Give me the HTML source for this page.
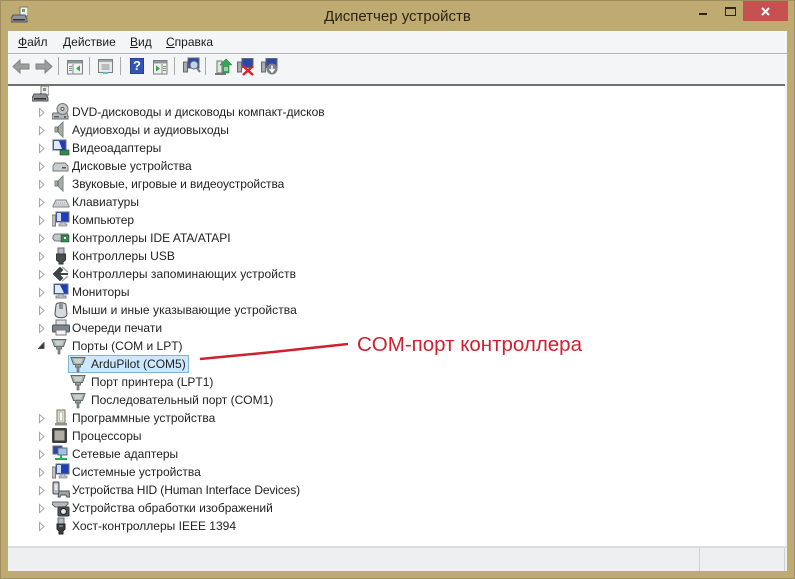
<!DOCTYPE html>
<html lang="ru"><head><meta charset="utf-8"><title>Диспетчер устройств</title>
<style>
html,body{margin:0;padding:0;background:#bda96f}
#w{position:relative;width:795px;height:579px;overflow:hidden;background:#bfab72;font-family:"Liberation Sans",sans-serif;color:#111;box-shadow:inset 0 0 0 1px #a08f5e}
#w div,#w svg{position:absolute}
.t{font-size:12px;line-height:18px;height:18px;white-space:nowrap;color:#222}
.m{font-size:12px;top:35px;color:#1a1a1a;line-height:15px}
u{text-decoration:underline}
.sep{width:1px;height:18px;top:57px;background:#a9a9a9}
</style></head><body><div id="w">
<svg style="left:0;top:0" width="795" height="579" viewBox="0 0 795 579">
<defs>
<g id="disk"><path d="M1 9h14l1 3v3H0v-3z" fill="#b4b7b9" stroke="#666b6f"/><rect x="2" y="12" width="5" height="1.500" fill="#5b6065"/><circle cx="13" cy="13" r="1" fill="#444"/></g>
<g id="dvd"><g transform="translate(0,1)"><use href="#disk"/></g><circle cx="10.500" cy="6" r="5.500" fill="#c3c8cc" stroke="#71787c"/><circle cx="10.500" cy="6" r="1.500" fill="#fff" stroke="#555"/></g>
<g id="spk"><path d="M3 6h3l5-5v15l-5-5H3z" fill="#a9ada9" stroke="#7e827e"/><path d="M6 6v5" stroke="#555"/></g>
<g id="mon"><rect x="2" y="1" width="14" height="10" fill="#1f3fb0" stroke="#6b7378"/><path d="M3 2h5l4 8H3z" fill="#dfe9f8"/><path d="M7 11h4v2h3v2H4v-2h3z" fill="#c0c4c8" stroke="#888"/></g>
<g id="pc"><rect x="0" y="4" width="3.500" height="11" fill="#c0c2c2" stroke="#777"/><rect x="4" y="1" width="13" height="10" fill="#1e3fb5" stroke="#66707a"/><path d="M5 2h4v8H5z" fill="#e5eefa" opacity=".9"/><path d="M9 11h4v2h2v2H7v-2h2z" fill="#c0c4c8" stroke="#888" stroke-width=".7"/></g>
<g id="port"><path d="M1 2.500h14l-2.500 7H3.500z" fill="#aeb4b4" stroke="#5d6a6a"/><path d="M4 5h8M5 7h6" stroke="#e6eaea"/><rect x="5.500" y="9.500" width="5" height="2.500" fill="#9ea4a4" stroke="#676"/><rect x="7" y="12" width="2" height="5" fill="#8d9393" stroke="#666" stroke-width=".7"/></g>
<g id="mgr"><rect x="9" y="0" width="8" height="9" fill="#eee" stroke="#777"/><rect x="11" y="2" width="3" height="3" fill="#76a06a"/><path d="M2 8h12l2 4v3H0v-3z" fill="#8f9498" stroke="#50565a"/><rect x="2" y="12" width="12" height="1.500" fill="#333"/></g>
<path id="c" d="M.5 .5l4.500 4-4.500 4z" fill="#fff" stroke="#a6a6a6"/>
</defs>
</svg>

<svg style="left:11px;top:5px" width="17" height="20"><use href="#mgr" y="2"/></svg>
<div style="left:0;width:795px;top:8px;text-align:center;font-size:15px;line-height:18px;color:#2a2410">Диспетчер устройств</div>
<div style="left:699px;top:13px;width:8px;height:2px;background:#2a2410"></div>
<div style="left:725px;top:7px;width:9px;height:6px;border:1px solid #2a2410;border-top-width:2px;box-sizing:content-box"></div>
<div style="left:743px;top:1px;width:45px;height:20px;background:#c75050"></div>
<svg style="left:761px;top:7px" width="10" height="9"><path d="M1 1l7 7M8 1l-7 7" stroke="#fff" stroke-width="2"/></svg>

<div style="left:8px;top:31px;width:779px;height:22px;background:#f4f5f7;border-bottom:1px solid #b4b5b7"></div>
<div style="left:8px;top:54px;width:779px;height:30px;background:#f4f5f7;border-bottom:1px solid #e6e7e9"></div>
<div class="m" style="left:18px"><u>Ф</u>айл</div>
<div class="m" style="left:63px"><u>Д</u>ействие</div>
<div class="m" style="left:130px"><u>В</u>ид</div>
<div class="m" style="left:166px"><u>С</u>правка</div>

<svg style="left:12px;top:58px" width="42" height="18"><path d="M1 8.500L8 2v4h9v5H8v4z" fill="#9a9e9c" stroke="#7f8482"/><path d="M40 8.500L33 2v4h-9v5h9v4z" fill="#9a9e9c" stroke="#7f8482"/></svg>
<div class="sep" style="left:58px"></div>
<svg style="left:67px;top:60px" width="17" height="15"><rect x=".5" y=".5" width="15" height="13.500" fill="#f0f2f0" stroke="#7a8080"/><rect x="1" y="1" width="14" height="2.500" fill="#8c989e"/><path d="M6 4v10" stroke="#888"/><path d="M13 5.500v6l-4-3z" fill="#36a646"/><path d="M2 6.500h3M2 8.500h3M2 10.500h3" stroke="#888"/></svg>
<div class="sep" style="left:89px"></div>
<svg style="left:98px;top:58px" width="16" height="17"><rect x=".5" y="1.500" width="14" height="13" fill="#e8eaea" stroke="#7a8080"/><rect x="1" y="2" width="13" height="2" fill="#9aa7ad"/><path d="M3.500 7h8M3.500 9h8M3.500 11h8" stroke="#8a8f90"/><rect x="5" y="14" width="5" height="2" fill="#5fc3d0"/></svg>
<div class="sep" style="left:120px"></div>
<div style="left:130px;top:58px;width:12px;height:14px;background:#2f55b5;border:1px solid #24408e;color:#fff;font:bold 13px/14px 'Liberation Sans',sans-serif;text-align:center">?</div>
<svg style="left:153px;top:60px" width="15" height="15"><rect x=".5" y=".5" width="13.500" height="13.500" fill="#f0f2f0" stroke="#7a8080"/><rect x="1" y="1" width="12.500" height="2.500" fill="#8c989e"/><path d="M9 4v10" stroke="#888"/><path d="M3 5.500v6l4-3z" fill="#36a646"/><path d="M10 6.500h3M10 8.500h3M10 10.500h3" stroke="#888"/></svg>
<div class="sep" style="left:174px"></div>
<svg style="left:183px;top:57px" width="18" height="19"><rect x="0.500" y="5" width="4" height="10" fill="#a8acac" stroke="#666"/><rect x="5" y="1" width="11" height="10" fill="#2b49a8" stroke="#667"/><circle cx="11" cy="8" r="4" fill="#c3d5e8" stroke="#667"/><path d="M14 11l3 4" stroke="#777" stroke-width="2"/></svg>
<div class="sep" style="left:205px"></div>
<svg style="left:215px;top:57px" width="17" height="19"><path d="M2 4h5v12H2z" fill="#e4e6e4" stroke="#676"/><path d="M0 16h11v2H0z" fill="#777"/><path d="M11 2l6 6h-3v8H8V8H5z" fill="#3aa35a" stroke="#2b8045" stroke-width=".6"/><path d="M9 11h4M9 13h4" stroke="#fff"/></svg>
<svg style="left:237px;top:58px" width="18" height="18"><rect x="0.500" y="4" width="4" height="10" fill="#a8acac" stroke="#666"/><rect x="5" y="0.500" width="11" height="9" fill="#2b49a8" stroke="#667"/><path d="M6 8l10 9M16 8L6 17" stroke="#d8232a" stroke-width="2.500"/></svg>
<svg style="left:261px;top:58px" width="18" height="19"><rect x="0.500" y="4" width="4" height="10" fill="#a8acac" stroke="#666"/><rect x="5" y="0.500" width="11" height="9" fill="#2b49a8" stroke="#667"/><circle cx="11" cy="11" r="5.500" fill="#7c8084"/><path d="M11 7.500v5M8.500 11l2.500 3 2.500-3" fill="none" stroke="#fff" stroke-width="1.500"/></svg>

<div style="left:8px;top:84px;width:777px;height:462px;background:#fff;border-top:2px solid #6f7073;box-sizing:border-box"></div>
<div style="left:785px;top:84px;width:2px;height:462px;background:#f4f5f7"></div>
<div style="left:8px;top:546px;width:779px;height:2px;background:#dcdcdc"></div>
<div style="left:8px;top:548px;width:779px;height:23px;background:#eeeff1"></div>
<div style="left:699px;top:548px;width:1px;height:23px;background:#d0d0d2"></div>
<div style="left:784px;top:548px;width:1px;height:23px;background:#d0d0d2"></div>

<svg style="left:37px;top:91px" width="6" height="6"><path d="M5.500 .5v5h-5z" fill="#333" stroke="#555"/></svg>
<svg style="left:32px;top:86px" width="17" height="18"><use href="#mgr"/></svg>

<svg style="left:39px;top:108px" width="6" height="432"><g id="cs"><use href="#c"/><use href="#c" y="18"/><use href="#c" y="36"/><use href="#c" y="54"/><use href="#c" y="72"/><use href="#c" y="90"/><use href="#c" y="108"/><use href="#c" y="126"/><use href="#c" y="144"/><use href="#c" y="162"/><use href="#c" y="180"/><use href="#c" y="198"/><use href="#c" y="216"/><use href="#c" y="306"/><use href="#c" y="324"/><use href="#c" y="342"/><use href="#c" y="360"/><use href="#c" y="378"/><use href="#c" y="396"/><use href="#c" y="414"/></g></svg>
<svg style="left:38px;top:342px" width="7" height="7"><path d="M6 .5v6H.5z" fill="#333" stroke="#555"/></svg>

<svg style="left:52px;top:103px" width="18" height="18"><use href="#dvd"/></svg>
<svg style="left:52px;top:121px" width="18" height="18"><use href="#spk"/></svg>
<svg style="left:52px;top:139px" width="18" height="18"><rect x="1" y="1" width="13" height="10" fill="#1e3fb5" stroke="#66707a"/><path d="M2 2h5l3 8H2z" fill="#dfe9f8"/><rect x="8" y="11" width="9" height="5" fill="#2e8b4a" stroke="#333" stroke-width=".6"/></svg>
<svg style="left:52px;top:157px" width="18" height="18"><path d="M1 9l2-3h10l3 3v5H1z" fill="#cbced0" stroke="#777"/><rect x="10" y="10" width="4" height="1.500" fill="#555"/></svg>
<svg style="left:52px;top:175px" width="18" height="18"><use href="#spk"/></svg>
<svg style="left:52px;top:193px" width="18" height="18"><path d="M1 13l3-6h10l3 6v1H1z" fill="#d8dadc" stroke="#7b7f83"/><path d="M4 10h10M3.500 12h11" stroke="#9a9ea2" stroke-dasharray="1 1"/></svg>
<svg style="left:52px;top:211px" width="18" height="18"><use href="#pc"/></svg>
<svg style="left:52px;top:229px" width="18" height="18"><path d="M1 7l2-2h13v7H3l-2-2z" fill="#c4c7c9" stroke="#777"/><rect x="9" y="6" width="8" height="7" fill="#2e8b4a" stroke="#333" stroke-width=".5"/><rect x="12" y="8" width="2" height="2" fill="#fff"/></svg>
<svg style="left:52px;top:247px" width="18" height="18"><rect x="6" y="1" width="6" height="6" fill="#b9bcbf" stroke="#666"/><path d="M4.500 7h9v6l-2.500 2v2H7v-2l-2.500-2z" fill="#4a4d50" stroke="#333"/></svg>
<svg style="left:52px;top:265px" width="18" height="18"><path d="M1 9l7-7 3 3-4 4 4 4-3 3z" fill="#3e4346" stroke="#222" stroke-width=".5"/><path d="M7 9h9" stroke="#444" stroke-width="2"/><path d="M10 2l6 5M10 16l6-5" stroke="#aaa" stroke-width="1.500"/></svg>
<svg style="left:52px;top:283px" width="18" height="18"><use href="#mon"/></svg>
<svg style="left:52px;top:301px" width="18" height="18"><path d="M4 4c0-3 10-3 10 0l1 9c0 5-12 5-12 0z" fill="#d8dadb" stroke="#4a4e52"/><path d="M7 2v6h4V2" fill="#8d9194"/></svg>
<svg style="left:52px;top:319px" width="18" height="18"><rect x="4" y="1" width="10" height="5" fill="#e0e0e0" stroke="#777"/><rect x="0.500" y="6" width="17" height="7" rx="1" fill="#7f8488" stroke="#4e5256"/><rect x="4" y="11" width="10" height="5" fill="#f4f4f4" stroke="#777"/></svg>
<svg style="left:51px;top:337px" width="18" height="18"><use href="#port"/></svg>

<div style="left:68px;top:355px;width:121px;height:18px;box-sizing:border-box;background:#cce8ff;border:1px solid #7fb4d8"></div>
<svg style="left:70px;top:355px" width="18" height="18"><use href="#port"/></svg>
<svg style="left:70px;top:373px" width="18" height="18"><use href="#port"/></svg>
<svg style="left:70px;top:391px" width="18" height="18"><use href="#port"/></svg>

<svg style="left:52px;top:409px" width="18" height="18"><rect x="5" y="1" width="8" height="13" fill="#e6e0c0" stroke="#73776a"/><rect x="7.500" y="3" width="3" height="9" fill="#fff" stroke="#999" stroke-width=".6"/><rect x="3" y="14" width="12" height="2.500" fill="#8f9490"/></svg>
<svg style="left:52px;top:427px" width="18" height="18"><rect x="0" y="1" width="15" height="15" rx="1.500" fill="#3b3d3f"/><rect x="2.500" y="3.500" width="10" height="10" fill="#b0aea3"/></svg>
<svg style="left:52px;top:445px" width="18" height="18"><rect x="1" y="1" width="9" height="8" fill="#2b49a8" stroke="#667"/><rect x="6" y="3" width="9" height="7" fill="#9fc0ea" stroke="#667"/><path d="M3 14h12M9 10v4" stroke="#23b04a" stroke-width="2"/></svg>
<svg style="left:52px;top:463px" width="18" height="18"><use href="#pc"/></svg>
<svg style="left:52px;top:481px" width="18" height="18"><rect x="1" y="1" width="6" height="12" rx="1" fill="#b8bcc0" stroke="#444"/><rect x="2.500" y="3" width="3" height="6" fill="#dfe8f2"/><path d="M7 10h10l1 6h-3l-1-2H9l-1 2H6z" fill="#9ea3a8" stroke="#4e5256"/></svg>
<svg style="left:52px;top:499px" width="18" height="18"><path d="M0 3h16v2l-3 3H3L0 5z" fill="#b6babd" stroke="#666"/><rect x="6" y="8" width="11" height="9" rx="1" fill="#4a5560" stroke="#333"/><circle cx="11.500" cy="12.500" r="3" fill="#e3e8ec" stroke="#222"/></svg>
<svg style="left:52px;top:517px" width="18" height="18"><rect x="6" y="1" width="6" height="6" fill="#b9bcbf" stroke="#666"/><path d="M5 7h8v5l-2 2v3H7v-3l-2-2z" fill="#3c3f42" stroke="#222"/><path d="M7 9h4" stroke="#aaa"/></svg>

<div class="t" style="left:72px;top:103px">DVD-дисководы и дисководы компакт-дисков</div>
<div class="t" style="left:72px;top:121px">Аудиовходы и аудиовыходы</div>
<div class="t" style="left:72px;top:139px">Видеоадаптеры</div>
<div class="t" style="left:72px;top:157px">Дисковые устройства</div>
<div class="t" style="left:72px;top:175px;letter-spacing:-.06px">Звуковые, игровые и видеоустройства</div>
<div class="t" style="left:72px;top:193px">Клавиатуры</div>
<div class="t" style="left:72px;top:211px">Компьютер</div>
<div class="t" style="left:72px;top:229px">Контроллеры IDE ATA/ATAPI</div>
<div class="t" style="left:72px;top:247px">Контроллеры USB</div>
<div class="t" style="left:72px;top:265px;letter-spacing:.06px">Контроллеры запоминающих устройств</div>
<div class="t" style="left:72px;top:283px">Мониторы</div>
<div class="t" style="left:72px;top:301px;letter-spacing:.06px">Мыши и иные указывающие устройства</div>
<div class="t" style="left:72px;top:319px">Очереди печати</div>
<div class="t" style="left:72px;top:337px">Порты (COM и LPT)</div>
<div class="t" style="left:91px;top:355px">ArduPilot (COM5)</div>
<div class="t" style="left:91px;top:373px">Порт принтера (LPT1)</div>
<div class="t" style="left:91px;top:391px">Последовательный порт (COM1)</div>
<div class="t" style="left:72px;top:409px">Программные устройства</div>
<div class="t" style="left:72px;top:427px">Процессоры</div>
<div class="t" style="left:72px;top:445px">Сетевые адаптеры</div>
<div class="t" style="left:72px;top:463px">Системные устройства</div>
<div class="t" style="left:72px;top:481px;letter-spacing:-.12px">Устройства HID (Human Interface Devices)</div>
<div class="t" style="left:72px;top:499px">Устройства обработки изображений</div>
<div class="t" style="left:72px;top:517px">Хост-контроллеры IEEE 1394</div>

<svg style="left:195px;top:338px" width="158" height="25"><path d="M5 21L78 14 153 6" fill="none" stroke="#d0202f" stroke-width="2.500"/></svg>
<div style="left:357px;top:333px;font-size:20.500px;line-height:24px;color:#d0202f;white-space:nowrap">COM-порт контроллера</div>
</div></body></html>
